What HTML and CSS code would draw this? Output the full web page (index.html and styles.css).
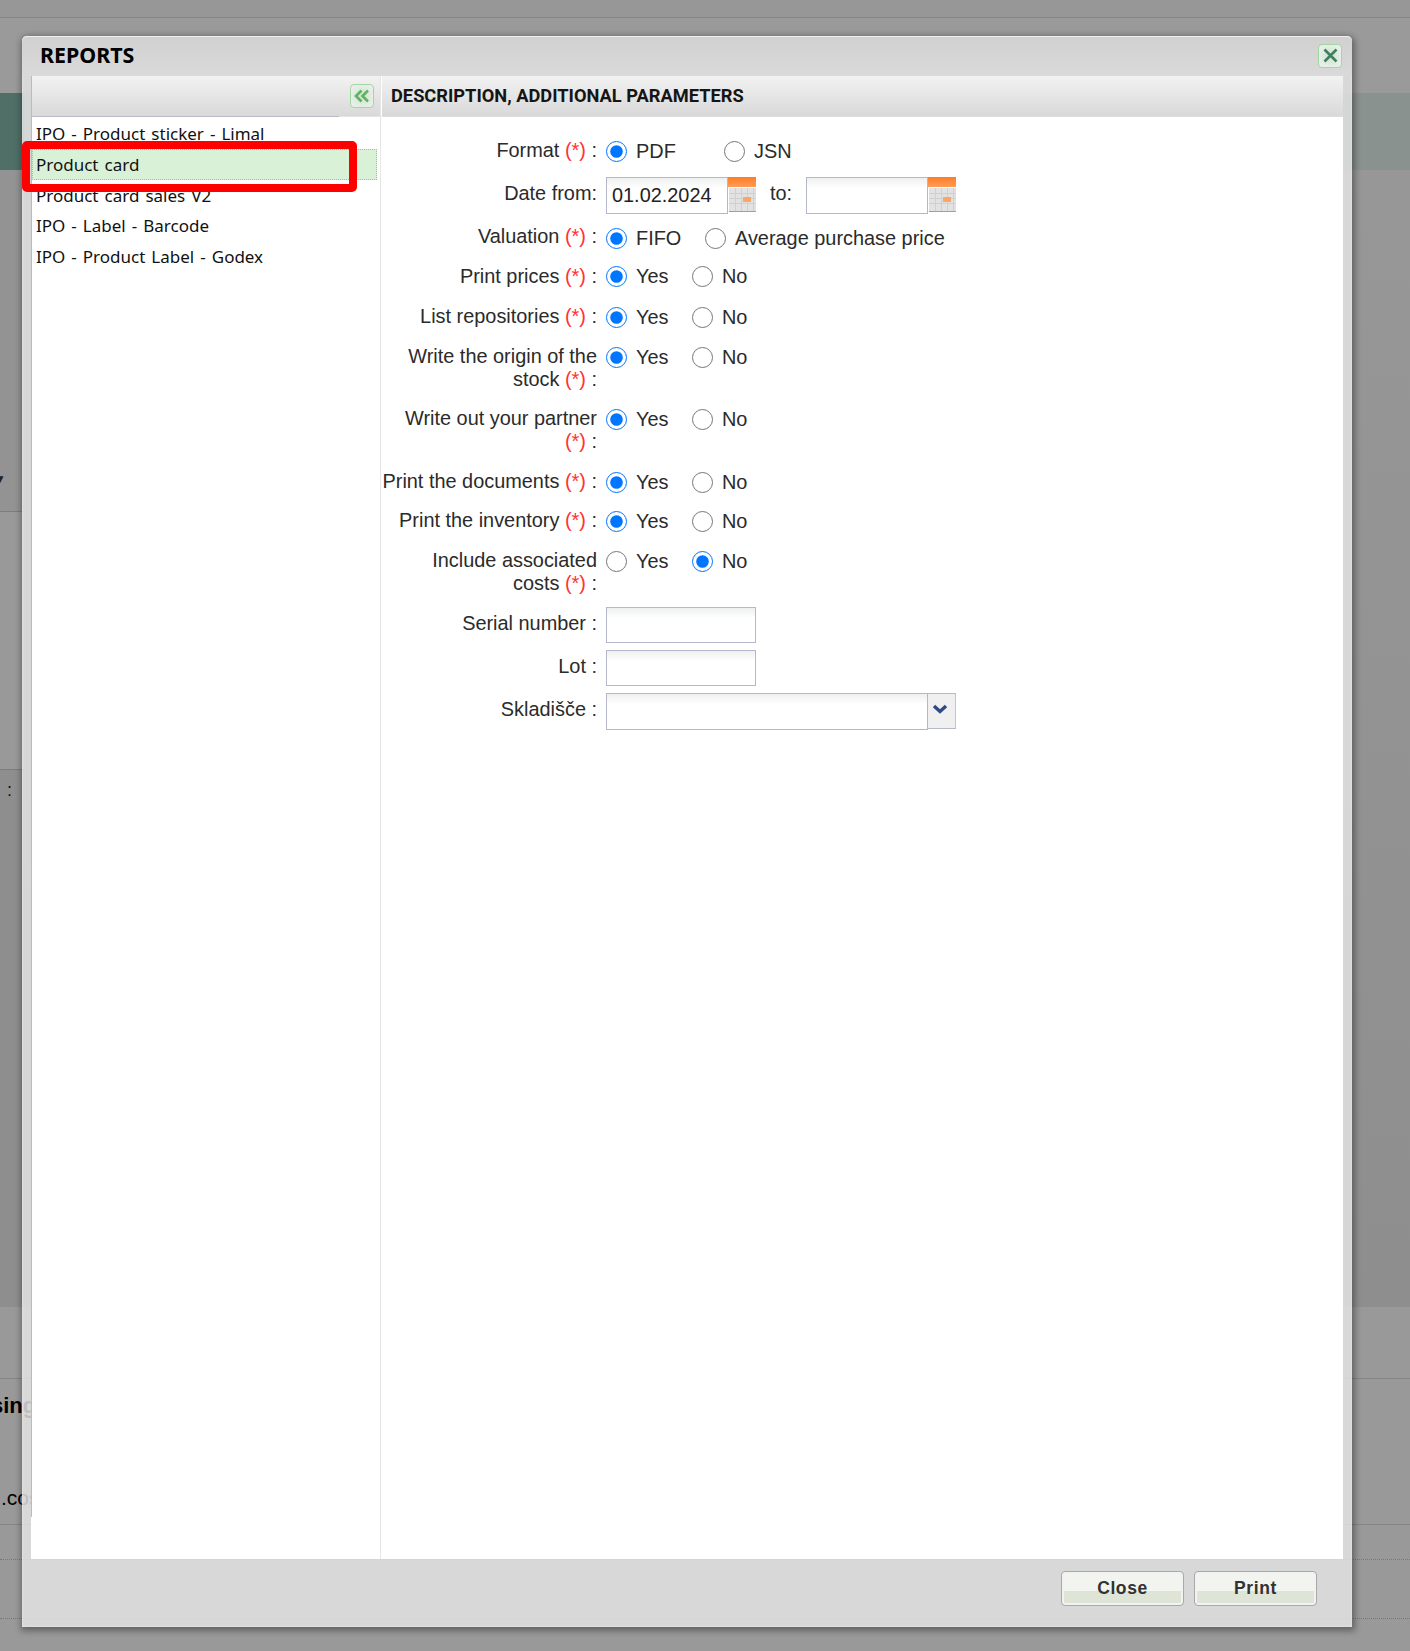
FILE: index.html
```html
<!DOCTYPE html>
<html lang="en">
<head>
<meta charset="utf-8">
<title>Reports</title>
<link rel="stylesheet" href="styles.css">
</head>
<body>
<div class="backdrop">
  <div class="bd-top"></div>
  <div class="bd-gap"></div>
  <div class="bd-band"><div class="bd-band-left"></div></div>
  <div class="bd-main">
    <div class="bd-a"><span class="bd-caret">▼</span></div>
    <div class="bd-b"></div>
    <div class="bd-c"><span class="bd-colon">:</span></div>
  </div>
  <div class="bd-d"></div>
  <div class="bd-e"><b class="bd-sing">sing</b><span class="bd-cos">.cos</span></div>
  <div class="bd-f"></div>
  <div class="bd-g"></div>
  <div class="bd-h"></div>
</div>

<div class="dialog">
  <div class="titlebar">
    <h1 class="title">REPORTS</h1>
    <button class="icon-btn close-x" type="button" aria-label="Close">
      <svg width="17" height="17" viewBox="0 0 17 17"><path d="M2.500 2.500 14.500 14.500M14.500 2.500 2.500 14.500" stroke="#3f7f5e" stroke-width="2.600" fill="none"/></svg>
    </button>
  </div>
  <div class="panes">
    <aside class="left">
      <div class="left-head">
        <button class="icon-btn collapse" type="button" aria-label="Collapse">
          <svg width="16" height="14" viewBox="0 0 16 14"><path d="M7.500 1.500 2 7l5.500 5.500M14 1.500 8.500 7l5.500 5.500" stroke="#5fb35f" stroke-width="2.600" fill="none"/></svg>
        </button>
      </div>
      <ul class="list">
        <li class="item">IPO - Product sticker - Limal</li>
        <li class="item selected">Product card</li>
        <li class="item">Product card sales V2</li>
        <li class="item">IPO - Label - Barcode</li>
        <li class="item">IPO - Product Label - Godex</li>
      </ul>
    </aside>
    <section class="right">
      <div class="right-head">DESCRIPTION, ADDITIONAL PARAMETERS</div>
      <form class="form">
        <div class="row h38">
          <label class="lab">Format <i>(*)</i> :</label>
          <div class="ctl down1">
            <span class="opt w118"><input type="radio" name="f" checked>PDF</span>
            <span class="opt"><input type="radio" name="f">JSN</span>
          </div>
        </div>
        <div class="row h48">
          <label class="lab lab-date">Date from:</label>
          <div class="dates">
            <input class="txt date" type="text" value="01.02.2024">
            <svg class="cal" width="28" height="36" viewBox="0 0 28 36"><defs><linearGradient id="ob" x1="0" y1="0" x2="0" y2="1"><stop offset="0" stop-color="#ff7c24"/><stop offset="1" stop-color="#ff9c58"/></linearGradient></defs><rect width="28" height="10" fill="url(#ob)"/><rect x="1" y="11" width="27" height="23" fill="#e2e2e2"/><path d="M1 16.500h27M1 21.500h27M1 26.500h27M7.500 11v23M13.500 11v23M19.500 11v23M25.500 11v23" stroke="#d0d0d0" fill="none"/><rect x="15" y="20" width="8" height="5" fill="#ffa468"/><rect y="34" x="1" width="27" height="1" fill="#a0a0a0"/></svg>
            <span class="to">to:</span>
            <input class="txt date" type="text">
            <svg class="cal" width="28" height="36" viewBox="0 0 28 36"><rect width="28" height="10" fill="url(#ob)"/><rect x="1" y="11" width="27" height="23" fill="#e2e2e2"/><path d="M1 16.500h27M1 21.500h27M1 26.500h27M7.500 11v23M13.500 11v23M19.500 11v23M25.500 11v23" stroke="#d0d0d0" fill="none"/><rect x="15" y="20" width="8" height="5" fill="#ffa468"/><rect y="34" x="1" width="27" height="1" fill="#a0a0a0"/></svg>
          </div>
        </div>
        <div class="row h40">
          <label class="lab">Valuation <i>(*)</i> :</label>
          <div class="ctl down2">
            <span class="opt w99"><input type="radio" name="v" checked>FIFO</span>
            <span class="opt"><input type="radio" name="v">Average purchase price</span>
          </div>
        </div>
        <div class="row h40">
          <label class="lab">Print prices <i>(*)</i> :</label>
          <div class="ctl">
            <span class="opt w86"><input type="radio" name="p" checked>Yes</span>
            <span class="opt"><input type="radio" name="p">No</span>
          </div>
        </div>
        <div class="row h40">
          <label class="lab">List repositories <i>(*)</i> :</label>
          <div class="ctl down1">
            <span class="opt w86"><input type="radio" name="l" checked>Yes</span>
            <span class="opt"><input type="radio" name="l">No</span>
          </div>
        </div>
        <div class="row h62">
          <label class="lab">Write the origin of the stock <i>(*)</i> :</label>
          <div class="ctl down1">
            <span class="opt w86"><input type="radio" name="o" checked>Yes</span>
            <span class="opt"><input type="radio" name="o">No</span>
          </div>
        </div>
        <div class="row h63">
          <label class="lab">Write out your partner <i>(*)</i> :</label>
          <div class="ctl down1">
            <span class="opt w86"><input type="radio" name="w" checked>Yes</span>
            <span class="opt"><input type="radio" name="w">No</span>
          </div>
        </div>
        <div class="row h39">
          <label class="lab">Print the documents <i>(*)</i> :</label>
          <div class="ctl down1">
            <span class="opt w86"><input type="radio" name="d" checked>Yes</span>
            <span class="opt"><input type="radio" name="d">No</span>
          </div>
        </div>
        <div class="row h40">
          <label class="lab">Print the inventory <i>(*)</i> :</label>
          <div class="ctl down1">
            <span class="opt w86"><input type="radio" name="n" checked>Yes</span>
            <span class="opt"><input type="radio" name="n">No</span>
          </div>
        </div>
        <div class="row h58">
          <label class="lab">Include associated costs <i>(*)</i> :</label>
          <div class="ctl down1">
            <span class="opt w86"><input type="radio" name="c">Yes</span>
            <span class="opt"><input type="radio" name="c" checked>No</span>
          </div>
        </div>
        <div class="row h43">
          <label class="lab lab-field">Serial number :</label>
          <input class="txt short" type="text">
        </div>
        <div class="row h43">
          <label class="lab lab-field">Lot :</label>
          <input class="txt short" type="text">
        </div>
        <div class="row">
          <label class="lab lab-field">Skladišče :</label>
          <div class="combo">
            <input class="txt wide" type="text">
            <span class="combo-btn">
              <svg width="16" height="10" viewBox="0 0 16 10"><path d="M2 2 8 7.500 14 2" stroke="#2f4b85" stroke-width="3.400" fill="none"/></svg>
            </span>
          </div>
        </div>
      </form>
    </section>
  </div>
  <div class="footer">
    <button class="btn" type="button">Close</button>
    <button class="btn" type="button">Print</button>
  </div>
</div>

<div class="marker"></div>
</body>
</html>
```
FILE: styles.css
```css
* { box-sizing: border-box; }
html, body { margin: 0; padding: 0; }
body {
  width: 1410px;
  height: 1651px;
  overflow: hidden;
  position: relative;
  background: #9a9a9a;
  font-family: "Liberation Sans", Arial, sans-serif;
}

/* dimmed page behind the dialog */
.backdrop { width: 1410px; height: 1651px; color: #000; }
.bd-top { height: 18px; background: #979797; border-bottom: 1px solid #858585; }
.bd-gap { height: 75px; background: #9a9a9a; }
.bd-band { height: 77px; background: #8a9290; }
.bd-band-left { width: 24px; height: 77px; background: #4f6f67; }
.bd-main { height: 1137px; background: linear-gradient(#979797, #8e8e8e); }
.bd-a { width: 24px; height: 342px; background: #939393; border-bottom: 1px solid #7d7d7d; padding-top: 304px; }
.bd-caret { display: block; font-size: 12px; line-height: 10px; margin-left: -6px; color: #222; }
.bd-b { width: 24px; height: 258px; background: #999; border-bottom: 1px solid #7d7d7d; }
.bd-c { width: 24px; height: 537px; background: #8e8e8e; padding-top: 9px; }
.bd-colon { margin-left: 7px; font-size: 18px; line-height: 22px; color: #111; }
.bd-d { height: 72px; background: #999; border-bottom: 1px solid #858585; }
.bd-e { height: 146px; background: #999; border-bottom: 1px solid #858585; position: relative; font-size: 20px; }
.bd-sing { position: absolute; left: 0; top: 15px; line-height: 24px; font-size: 22px; margin-left: -9px; }
.bd-cos { position: absolute; left: 0; top: 107px; line-height: 24px; margin-left: 1px; font-size: 21px; }
.bd-f { height: 35px; background: #999; border-bottom: 1px dotted #777; }
.bd-g { height: 59px; background: #999; border-bottom: 1px dotted #777; }
.bd-h { height: 33px; background: #999; }

/* dialog */
.dialog {
  position: absolute;
  left: 22px;
  top: 36px;
  width: 1330px;
  height: 1591px;
  display: flex;
  flex-direction: column;
  background: rgba(229, 229, 229, .83);
  border-radius: 5px 5px 0 0;
  box-shadow: 0 0 2px 1px rgba(255, 255, 255, .25) inset, 1px 2px 6px 2px rgba(0, 0, 0, .35);
}
.titlebar {
  height: 40px;
  flex: none;
  display: flex;
  align-items: center;
  justify-content: space-between;
  padding: 0 10px 3px 18px;
  background: linear-gradient(#cfcfcfd0, #dadadad0);
  border-top: 1px solid #efefef;
  border-radius: 5px 5px 0 0;
}
.title {
  margin: 0;
  font: 700 21.400px/24px "Noto Sans", sans-serif;
  color: #000;
}
.icon-btn {
  display: flex;
  align-items: center;
  justify-content: center;
  padding: 0;
  width: 24px;
  height: 24px;
  border: 1px solid #a3d6a3;
  border-radius: 4px;
  background: radial-gradient(#cfe3d2, #eef3ee);
}
.close-x { margin-top: 1px; }
.panes {
  flex: 1;
  display: flex;
  margin: 0 9px;
  background: #fff;
}
.left {
  width: 349px;
  padding-left: 1px;
  background: linear-gradient(#b9b9c9, #b9b9c9) left top / 1px 1441px no-repeat, #fff;
}
.left-head {
  height: 40px;
  display: flex;
  justify-content: flex-end;
  padding: 8px 6px 0 0;
  background: linear-gradient(#f2f2f2, #d9d9d9);
}
.list {
  list-style: none;
  margin: 0;
  padding: 2px 0 0 0;
  background: linear-gradient(90deg, #b9b9c9 307px, #e4e4e4 307px) left top / 100% 1px no-repeat;
}
.item {
  height: 30.800px;
  padding: 0 4px;
  font: 400 17px/31px "Noto Sans", sans-serif;
  word-spacing: 1.600px;
  color: #111;
  white-space: nowrap;
}
.selected {
  background: #d9f1d7;
  border: 1px dotted #9bb6e0;
  margin-right: 3px;
  padding-left: 3px;
  line-height: 29px;
}
.right {
  flex: 1;
  border-left: 1px solid #e6e6e6;
  display: flex;
  flex-direction: column;
}
.right-head {
  height: 41px;
  padding-left: 9px;
  font: 700 18.250px/40px Roboto, sans-serif;
  color: #151515;
  background: linear-gradient(#f2f2f2, #d9d9d9);
  border-left: 1px solid #fff;
  border-bottom: 1px solid #dedede;
}
.form { padding: 22px 0 0 0; color: #2b2b2b; font-size: 19.900px; line-height: 22px; }
.row { display: flex; align-items: flex-start; }
.h38 { height: 38px; }
.h39 { height: 39px; }
.h40 { height: 40px; }
.h43 { height: 43px; }
.h48 { height: 48px; }
.h58 { height: 58px; }
.h62 { height: 62px; }
.h63 { height: 63px; }
.lab { width: 216px; flex: none; text-align: right; margin: 0 9px 0 0; line-height: 23px; }
.lab i { font-style: normal; color: #f33; }
.lab-date { padding-top: 5px; }
.lab-field { padding-top: 5px; }
.ctl { display: flex; }
.down1 { margin-top: 1px; }
.down2 { margin-top: 2px; }
.opt { display: flex; align-items: center; height: 22px; white-space: nowrap; }
.opt input { width: 21px; height: 21px; margin: 0 9px 0 0; flex: none; }
.w86 { width: 86px; }
.w99 { width: 99px; }
.w118 { width: 118px; }
.dates { display: flex; align-items: flex-start; }
.txt {
  display: block;
  height: 36px;
  border: 1px solid #b5b7cb;
  padding: 0 5px;
  font: inherit;
  color: #222;
  outline: none;
  background: linear-gradient(#eef0ef, #fff 10px);
}
.date { width: 122px; height: 37px; }
.cal { flex: none; display: block; }
.to { margin: 5px 14px 0 14px; width: 22px; }
.short { width: 150px; }
.combo { display: flex; align-items: flex-start; }
.wide { width: 322px; height: 37px; }
.combo-btn {
  width: 28px;
  height: 36px;
  display: flex;
  align-items: center;
  justify-content: center;
  padding: 0 3px 4px 0;
  background: #f0f0f0;
  border: 1px solid #b5b7cb;
  border-left: 0;
  border-right-color: #a8d8a8;
}
.footer {
  height: 68px;
  flex: none;
  display: flex;
  justify-content: flex-end;
  gap: 10px;
  padding: 12px 35px 0 0;
}
.btn {
  width: 123px;
  height: 35px;
  padding: 0 0 2px;
  border: 1px solid #a9a9a9;
  border-radius: 4px;
  box-shadow: inset 0 0 0 2px #f2f2f2;
  background: linear-gradient(#f2f5ef 0, #f2f5ef 58%, #dfe5d6 58%, #dfe5d6 100%);
  color: #333;
  font: 700 17.500px/30px "Liberation Sans", Arial, sans-serif;
  letter-spacing: .6px;
}

/* annotation drawn over the screenshot */
.marker {
  position: absolute;
  left: 22px;
  top: 141px;
  width: 335px;
  height: 51px;
  border: 8px solid #f00;
  border-radius: 5px;
}
```
